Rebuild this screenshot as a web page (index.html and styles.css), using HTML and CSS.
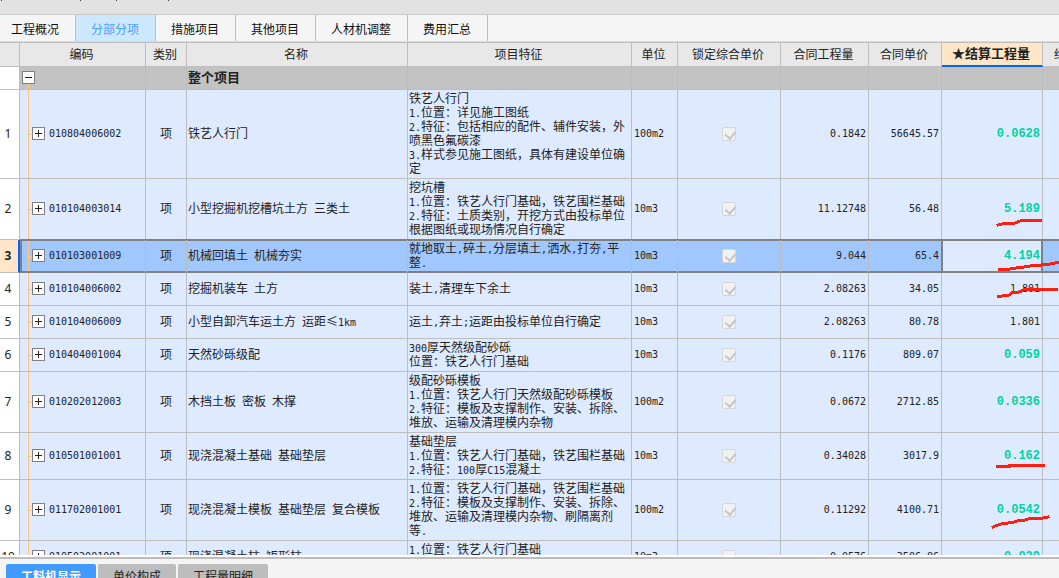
FILE: index.html
```html
<!DOCTYPE html>
<html lang="zh-CN">
<head>
<meta charset="utf-8">
<title>分部分项</title>
<link rel="stylesheet" href="styles.css">
</head>
<body>
<header class="strip">
  <svg width="180" height="1" aria-hidden="true"><path d="M1 0h1M80 0h1M116 0h1M168 0h1" stroke="#444" stroke-width="2"/></svg>
</header>
<nav class="tabs">
  <button class="tab">工程概况</button>
  <button class="tab active">分部分项</button>
  <button class="tab">措施项目</button>
  <button class="tab">其他项目</button>
  <button class="tab">人材机调整</button>
  <button class="tab">费用汇总</button>
</nav>
<main class="grid">
<table>
<colgroup><col class="c-no"><col class="c-code"><col class="c-kind"><col class="c-name"><col class="c-desc"><col class="c-unit"><col class="c-lock"><col class="c-qty"><col class="c-price"><col class="c-settle"><col></colgroup>
<thead>
<tr><th></th><th>编码</th><th>类别</th><th>名称</th><th>项目特征</th><th>单位</th><th>锁定综合单价</th><th>合同工程量</th><th>合同单价</th><th class="current">★结算工程量</th><th class="cut">结</th></tr>
</thead>
<tbody>
<tr class="group"><td class="no"></td><td class="code"><button class="toggle" aria-label="收起"></button></td><td></td><td class="name">整个项目</td><td></td><td></td><td></td><td></td><td></td><td></td><td></td></tr>
<tr><td class="no">1</td><td class="code"><button class="toggle plus" aria-label="展开"></button><span class="n">010804006002</span></td><td class="kind">项</td><td>铁艺人行门</td><td class="desc">铁艺人行门<br><span class="n">1.</span>位置：详见施工图纸<br><span class="n">2.</span>特征：包括相应的配件、辅件安装，外<br>喷黑色氟碳漆<br><span class="n">3.</span>样式参见施工图纸，具体有建设单位确<br>定</td><td class="n">100m2</td><td class="lock"><input type="checkbox" aria-label="锁定综合单价" checked disabled></td><td class="num n">0.1842</td><td class="num n">56645.57</td><td class="num edited">0.0628</td><td></td></tr>
<tr><td class="no">2</td><td class="code"><button class="toggle plus" aria-label="展开"></button><span class="n">010104003014</span></td><td class="kind">项</td><td>小型挖掘机挖槽坑土方<span class="n"> </span>三类土</td><td class="desc">挖坑槽<br><span class="n">1.</span>位置：铁艺人行门基础，铁艺围栏基础<br><span class="n">2.</span>特征：土质类别，开挖方式由投标单位<br>根据图纸或现场情况自行确定</td><td class="n">10m3</td><td class="lock"><input type="checkbox" aria-label="锁定综合单价" checked disabled></td><td class="num n">11.12748</td><td class="num n">56.48</td><td class="num edited">5.189</td><td></td></tr>
<tr class="selected"><td class="no">3</td><td class="code"><button class="toggle plus" aria-label="展开"></button><span class="n">010103001009</span></td><td class="kind">项</td><td>机械回填土<span class="n"> </span>机械夯实</td><td class="desc">就地取土<span class="n">,</span>碎土<span class="n">,</span>分层填土<span class="n">,</span>洒水<span class="n">,</span>打夯<span class="n">,</span>平<br>整<span class="n">.</span></td><td class="n">10m3</td><td class="lock"><input type="checkbox" aria-label="锁定综合单价" checked disabled></td><td class="num n">9.044</td><td class="num n">65.4</td><td class="num edited cell">4.194</td><td></td></tr>
<tr><td class="no">4</td><td class="code"><button class="toggle plus" aria-label="展开"></button><span class="n">010104006002</span></td><td class="kind">项</td><td>挖掘机装车<span class="n"> </span>土方</td><td class="desc">装土<span class="n">,</span>清理车下余土</td><td class="n">10m3</td><td class="lock"><input type="checkbox" aria-label="锁定综合单价" checked disabled></td><td class="num n">2.08263</td><td class="num n">34.05</td><td class="num n">1.801</td><td></td></tr>
<tr><td class="no">5</td><td class="code"><button class="toggle plus" aria-label="展开"></button><span class="n">010104006009</span></td><td class="kind">项</td><td>小型自卸汽车运土方<span class="n"> </span>运距≤<span class="n">1km</span></td><td class="desc">运土<span class="n">,</span>弃土<span class="n">;</span>运距由投标单位自行确定</td><td class="n">10m3</td><td class="lock"><input type="checkbox" aria-label="锁定综合单价" checked disabled></td><td class="num n">2.08263</td><td class="num n">80.78</td><td class="num n">1.801</td><td></td></tr>
<tr><td class="no">6</td><td class="code"><button class="toggle plus" aria-label="展开"></button><span class="n">010404001004</span></td><td class="kind">项</td><td>天然砂砾级配</td><td class="desc"><span class="n">300</span>厚天然级配砂砾<br>位置：铁艺人行门基础</td><td class="n">10m3</td><td class="lock"><input type="checkbox" aria-label="锁定综合单价" checked disabled></td><td class="num n">0.1176</td><td class="num n">809.07</td><td class="num edited">0.059</td><td></td></tr>
<tr><td class="no">7</td><td class="code"><button class="toggle plus" aria-label="展开"></button><span class="n">010202012003</span></td><td class="kind">项</td><td>木挡土板<span class="n"> </span>密板<span class="n"> </span>木撑</td><td class="desc">级配砂砾模板<br><span class="n">1.</span>位置：铁艺人行门天然级配砂砾模板<br><span class="n">2.</span>特征：模板及支撑制作、安装、拆除、<br>堆放、运输及清理模内杂物</td><td class="n">100m2</td><td class="lock"><input type="checkbox" aria-label="锁定综合单价" checked disabled></td><td class="num n">0.0672</td><td class="num n">2712.85</td><td class="num edited">0.0336</td><td></td></tr>
<tr><td class="no">8</td><td class="code"><button class="toggle plus" aria-label="展开"></button><span class="n">010501001001</span></td><td class="kind">项</td><td>现浇混凝土基础<span class="n"> </span>基础垫层</td><td class="desc">基础垫层<br><span class="n">1.</span>位置：铁艺人行门基础，铁艺围栏基础<br><span class="n">2.</span>特征：<span class="n">100</span>厚<span class="n">C15</span>混凝土</td><td class="n">10m3</td><td class="lock"><input type="checkbox" aria-label="锁定综合单价" checked disabled></td><td class="num n">0.34028</td><td class="num n">3017.9</td><td class="num edited">0.162</td><td></td></tr>
<tr><td class="no">9</td><td class="code"><button class="toggle plus" aria-label="展开"></button><span class="n">011702001001</span></td><td class="kind">项</td><td>现浇混凝土模板<span class="n"> </span>基础垫层<span class="n"> </span>复合模板</td><td class="desc"><span class="n">1.</span>位置：铁艺人行门基础，铁艺围栏基础<br><span class="n">2.</span>特征：模板及支撑制作、安装、拆除、<br>堆放、运输及清理模内杂物、刷隔离剂<br>等<span class="n">.</span></td><td class="n">100m2</td><td class="lock"><input type="checkbox" aria-label="锁定综合单价" checked disabled></td><td class="num n">0.11292</td><td class="num n">4100.71</td><td class="num edited">0.0542</td><td></td></tr>
<tr><td class="no">10</td><td class="code"><button class="toggle plus" aria-label="展开"></button><span class="n">010502001001</span></td><td class="kind">项</td><td>现浇混凝土柱<span class="n"> </span>矩形柱</td><td class="desc"><span class="n">1.</span>位置：铁艺人行门基础<br>&nbsp;</td><td class="n">10m3</td><td class="lock"><input type="checkbox" aria-label="锁定综合单价" checked disabled></td><td class="num n">0.0576</td><td class="num n">3586.86</td><td class="num edited">0.029</td><td></td></tr>
</tbody>
</table>
<svg class="marks" width="1059" height="513" viewBox="0 42 1059 513" aria-hidden="true">
  <path d="M998 225l4-1 4-1h9l5-2 8-1h12"/>
  <path d="M999 269h11l6-1 8-1 6-1 11-1 9-1 5-1 4-1"/>
  <path d="M998 296h4l7-1 3-2 7-1 5-2 7-1h25"/>
  <path d="M997 466h12M1009 465h34"/>
  <path d="M993 527l2-1 6-2 7-1 6-1 3-1 8-1 6-2h12l5-1"/>
</svg>
</main>
<footer class="bottom">
  <button class="sheet active">工料机显示</button>
  <button class="sheet">单价构成</button>
  <button class="sheet">工程量明细</button>
</footer>
</body>
</html>
```
FILE: styles.css
```css
* { box-sizing: border-box; }
body {
  margin: 0;
  height: 100vh;
  display: flex;
  flex-direction: column;
  overflow: hidden;
  background: #f4f4f4;
  color: #222;
  font: 12px/14px "Noto Sans CJK SC", sans-serif;
}
button { font: inherit; color: inherit; border: 0; margin: 0; padding: 0; }

.strip { flex: none; height: 15px; background: #e2e2e2; border-bottom: 1px solid #cbcbcb; }
.strip svg { display: block; }

.tabs { flex: none; display: flex; height: 27px; background: #f5f5f5; border-bottom: 1px solid #dcdcdc; }
.tab { padding: 2px 16px 0 15px; border-right: 1px solid #bdbdbd; background: none; color: #111; }
.tab:first-child { padding-left: 11px; }
.tab.active { background: #cce8ff; color: #4a9eff; }

.grid { flex: 1; min-height: 0; position: relative; overflow: hidden; border-top: 1px solid #bdbdbd; }
table { width: 100%; table-layout: fixed; border-collapse: separate; border-spacing: 0; }
.c-no { width: 20px; }
.c-code { width: 126px; }
.c-kind { width: 41px; }
.c-name { width: 221px; }
.c-desc { width: 224px; }
.c-unit { width: 46px; }
.c-lock { width: 103px; }
.c-qty { width: 88px; }
.c-price { width: 73px; }
.c-settle { width: 101px; }

th, td {
  padding: 1px 2px 3px 1px;
  border-right: 1px solid #bdbdbd;
  border-bottom: 1px solid #bdbdbd;
  white-space: nowrap;
  overflow: hidden;
}
th { height: 24px; padding: 0 2px 2px 0; background: #e8e8e8; font-weight: 400; }
th.current { background: #ffe6c8; border-bottom: 2px solid #0066ff; font-weight: 700; font-size: 13px; }
th.cut { padding-left: 11px; text-align: left; border-right: 0; }
td { height: 33px; background: #deeaff; }
td:last-child { border-right: 0; }

.n { font-family: "DejaVu Sans Mono", monospace; font-size: 10px; white-space: pre; }
span.n { line-height: 0; }
td.n, td.num { padding: 2px; }
td.no { padding: 2px 3px 2px 0; background: #fff; text-align: center; font-family: "Noto Sans", sans-serif; }
.kind, .lock { text-align: center; }
.kind { padding-left: 2px; }
.lock { padding: 2px 1px; }
.num { text-align: right; }
.edited { font: bold 12px/14px "Liberation Mono", monospace; color: #00d2a0; }

.code {
  padding: 0 0 3px 12px;
  background-image: linear-gradient(#ffc77d, #ffc77d), linear-gradient(#ffc77d, #ffc77d);
  background-repeat: no-repeat;
  background-position: 8px 0, 8px 50%;
  background-size: 1px 100%, 4px 1px;
}
.toggle {
  display: inline-block;
  width: 13px;
  height: 13px;
  margin-right: 4px;
  border: 1px solid #808080;
  vertical-align: middle;
  background: linear-gradient(#222, #222) center / 7px 1px no-repeat #fff;
}
.toggle.plus {
  background:
    linear-gradient(#222, #222) center / 7px 1px no-repeat,
    linear-gradient(#222, #222) center / 1px 7px no-repeat #fff;
}
.code .n { vertical-align: middle; }

.group td { height: 23px; padding-top: 0; padding-bottom: 3px; background-color: #c3c3c3; }
.group td.no { background: #fff; }
.group .name { font-weight: 700; font-size: 13px; }
.group .code { padding-left: 2px; background-position: 8px 100%, 8px 100%; background-size: 1px 6px, 1px 1px; }

input[type="checkbox"] {
  appearance: none;
  display: block;
  width: 14px;
  height: 14px;
  margin: 0 auto;
  border: 1px solid #d6d6d6;
  border-radius: 2px;
  background: #f1f1f1;
}
input[type="checkbox"]::before {
  content: "";
  display: block;
  width: 5px;
  height: 8px;
  margin: 1px 0 0 4px;
  border: solid #c6c6c6;
  border-width: 0 2px 2px 0;
  transform: rotate(42deg);
}

.selected td {
  background-color: #a0c8ff;
  border-bottom-color: #808080;
  box-shadow: 0 -1px #808080, inset 0 1px #808080, inset 0 -1px #808080;
}
.selected td.code { box-shadow: 0 -1px #808080, inset 0 1px #808080, inset 0 -1px #808080, inset 2px 0 #808080; }
.selected td.no { background: #ffe6c8; border-right: 2px solid #0066ff; border-bottom-color: #bdbdbd; box-shadow: none; padding-right: 2px; font-weight: 700; }
.selected td.cell {
  background: #deeaff;
  border-right-color: #808080;
  box-shadow: 0 -1px #808080, -1px 0 #808080, inset 1px 1px #808080, inset -1px -1px #808080;
}

.marks { position: absolute; top: -1px; left: 0; pointer-events: none; }
.marks path { fill: none; stroke: #ff1e10; stroke-width: 3; stroke-linecap: square; shape-rendering: crispEdges; }

.bottom {
  flex: none;
  display: flex;
  gap: 2px;
  height: 21px;
  margin-top: 2px;
  padding: 5px 6px 0;
  border-top: 2px solid #bdbdbd;
  box-shadow: 0 -2px #fff;
}
.sheet { height: 24px; padding: 0 15px; background: #bdbdbd; border-radius: 2px 2px 0 0; color: #222; }
.sheet.active { background: #409aff; color: #fff; font-weight: 700; }
```
